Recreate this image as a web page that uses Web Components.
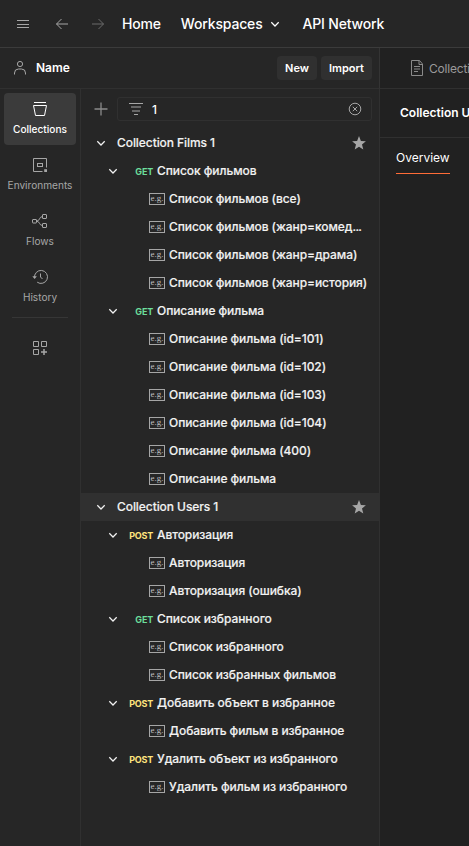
<!DOCTYPE html>
<html lang="ru">
<head>
<meta charset="utf-8">
<title>API workspace</title>
<style>
html,body{margin:0;height:100%;overflow:hidden;background:#262626}
body{font-family:Inter,"Noto Sans",sans-serif;font-size:12px;color:#fff}
.dots{letter-spacing:-.7px}
</style>
</head>
<body>
<app-shell>
  <top-bar slot="top"></top-bar>
  <workspace-bar slot="bar"></workspace-bar>
  <side-nav slot="nav">
    <nav-item icon="collections" active>Collections</nav-item>
    <nav-item icon="environments">Environments</nav-item>
    <nav-item icon="flows">Flows</nav-item>
    <nav-item icon="history">History</nav-item>
  </side-nav>
  <collection-panel slot="panel">
    <tree-row kind="collection">Collection Films 1</tree-row>
    <tree-row kind="request" method="GET">Список фильмов</tree-row>
    <tree-row kind="example">Список фильмов (все)</tree-row>
    <tree-row kind="example">Список фильмов (жанр=комед<span class="dots">...</span></tree-row>
    <tree-row kind="example">Список фильмов (жанр=драма)</tree-row>
    <tree-row kind="example">Список фильмов (жанр=история)</tree-row>
    <tree-row kind="request" method="GET">Описание фильма</tree-row>
    <tree-row kind="example">Описание фильма (id=101)</tree-row>
    <tree-row kind="example">Описание фильма (id=102)</tree-row>
    <tree-row kind="example">Описание фильма (id=103)</tree-row>
    <tree-row kind="example">Описание фильма (id=104)</tree-row>
    <tree-row kind="example">Описание фильма (400)</tree-row>
    <tree-row kind="example">Описание фильма</tree-row>
    <tree-row kind="collection" selected>Collection Users 1</tree-row>
    <tree-row kind="request" method="POST">Авторизация</tree-row>
    <tree-row kind="example">Авторизация</tree-row>
    <tree-row kind="example">Авторизация (ошибка)</tree-row>
    <tree-row kind="request" method="GET">Список избранного</tree-row>
    <tree-row kind="example">Список избранного</tree-row>
    <tree-row kind="example">Список избранных фильмов</tree-row>
    <tree-row kind="request" method="POST">Добавить объект в избранное</tree-row>
    <tree-row kind="example">Добавить фильм в избранное</tree-row>
    <tree-row kind="request" method="POST">Удалить объект из избранного</tree-row>
    <tree-row kind="example">Удалить фильм из избранного</tree-row>
  </collection-panel>
  <detail-pane slot="detail"></detail-pane>
</app-shell>
<script>
const ICONS = {
  menu: '<path d="M2 4.500h12M2 8.500h12M2 11.500h12"/>',
  back: '<path d="M14 8H2.500M7.500 3l-5 5 5 5"/>',
  forward: '<path d="M2 8h11.500M8.500 3l5 5-5 5"/>',
  down: '<path d="M4.300 6.300 8 10l3.700-3.700" stroke-width="1.250"/>',
  user: '<circle cx="8" cy="4" r="2.600"/><path d="M2.500 14.500v-1.500a4 4 0 0 1 4-4h3a4 4 0 0 1 4 4v1.500"/>',
  doc: '<path d="M3 .5h7.500L13.500 4v11.500h-11V.5zM10 .5v4h3.500M5 6.500h6M5 9h6M5 11.500h4"/>',
  collections: '<path d="M2 1.500h12M1.500 4.500h13l-2 10h-9z" stroke-linejoin="round"/>',
  environments: '<path d="M10.500 14.500h-9v-13h13v9"/><rect x="5.500" y="6.500" width="5" height="3"/><path d="M12.200 12.200h2.800v2.800h-2.800z" fill="currentColor" stroke="none"/>',
  flows: '<rect x=".5" y="6.500" width="4" height="3.500" rx=".5"/><rect x="10.500" y="1.500" width="4" height="4" rx=".5"/><rect x="10.500" y="10.500" width="4" height="4" rx=".5"/><path d="M4.500 8.200C8 8.200 7 3.500 10.500 3.500M4.500 8.200c3.500 0 2.500 4.300 6 4.300"/>',
  history: '<path d="M2.600 9A6.500 6.500 0 1 1 5.200 13.200M8.500 4.500V8l2 2"/><path d="M.3 7.300h4.600L2.600 10z" fill="currentColor" stroke="none"/>',
  apps: '<path d="M1.500 1.500h5v5h-5zM9.500 1.500h5v5h-5zM1.500 9.500h5v5h-5z"/><path d="M12 9v6M9 12h6" stroke-width="1.500"/>',
  plus: '<path d="M8 1.500v13M1.500 8h13" stroke-width="1.300"/>',
  filter: '<path d="M1 2.500h14M3 6h10M4 10h8M6 13.500h4" stroke-width="1.200"/>',
  clear: '<circle cx="8" cy="8" r="5.800"/><path d="m5.800 5.800 4.400 4.400M10.200 5.800l-4.400 4.400"/>',
  star: '<path d="m8 1 1.900 4.900 5 .3-3.900 3.200 1.300 5.200L8 11.700l-4.300 2.900 1.300-5.200L1.100 6.200l5-.3z" fill="currentColor" stroke="none"/>'
};
function define(name, css, html) {
  customElements.define(name, class extends HTMLElement {
    constructor() {
      super();
      const t = document.createElement('template');
      t.innerHTML = '<style>:host,*{box-sizing:border-box}' + css + '</style>' + (typeof html === 'function' ? html(this) : html);
      this.attachShadow({mode: 'open'}).append(t.content.cloneNode(true));
    }
  });
}
define('ui-icon', ':host{display:block;width:16px;height:16px;flex:none}svg{display:block;width:100%;height:100%}',
  el => `<svg viewBox="0 0 16 16" fill="none" stroke="currentColor" stroke-width="1">${ICONS[el.getAttribute('name')]}</svg>`);

define('app-shell', `:host{display:grid;height:100vh;grid-template:48px 41px 1fr / 81px 299px 1fr;background:#262626}
  .top{grid-column:1/4;border-bottom:1px solid #3b3b3b}
  .bar{grid-column:1/3;border-bottom:1px solid #303030;border-right:1px solid #343434}
  .nav{border-right:1px solid #303030}.panel{border-right:1px solid #303030;min-width:0}
  .detail{grid-column:3;grid-row:2/4;min-width:0;background:#212121}`,
  `<div class="top"><slot name="top"></slot></div><div class="bar"><slot name="bar"></slot></div>
   <div class="detail"><slot name="detail"></slot></div><div class="nav"><slot name="nav"></slot></div><div class="panel"><slot name="panel"></slot></div>`);

define('top-bar', `:host{display:flex;align-items:center;height:47px;padding-left:15px;font-size:14px;font-weight:500;letter-spacing:-.17px;color:#fff}
  ui-icon{color:#a6a6a6}.back{margin-left:23px}.fwd{margin-left:20px;color:#6b6b6b}.home{margin-left:16px}.ws{margin-left:20px}.chev{margin-left:4px;color:#fff}.api{margin-left:20px}`,
  `<ui-icon name="menu"></ui-icon><ui-icon class="back" name="back"></ui-icon><ui-icon class="fwd" name="forward"></ui-icon>
   <span class="home">Home</span><span class="ws">Workspaces</span><ui-icon class="chev" name="down"></ui-icon><span class="api">API Network</span>`);

define('workspace-bar', `:host{display:flex;align-items:center;height:40px;padding:0 7px 0 12px;font-weight:600}
  ui-icon{color:#a6a6a6;margin-right:8px}.name{flex:1;margin-top:-1px}
  button{all:unset;box-sizing:border-box;height:24px;line-height:24px;border-radius:4px;background:#303030;padding:0 8px;margin-left:4px;text-align:center;font-size:11px}
  .new{width:40px}.import{width:51px}`,
  `<ui-icon name="user"></ui-icon><span class="name">Name</span><button class="new">New</button><button class="import">Import</button>`);

define('side-nav', `:host{display:flex;flex-direction:column;align-items:center;padding:4px 4px 0;gap:4px}
  hr{width:56px;height:1px;border:0;background:#363636;margin:0}.apps{color:#a6a6a6;margin-top:18px}`,
  `<slot></slot><hr><ui-icon class="apps" name="apps"></ui-icon>`);

define('nav-item', `:host{display:flex;flex-direction:column;align-items:center;width:72px;height:52px;border-radius:4px;padding-top:8px;gap:4px;color:#a6a6a6;font-size:10.1px;line-height:16px}
  :host([active]){background:#3b3b3b;color:#fff;font-weight:500}span{white-space:nowrap}`,
  el => `<ui-icon name="${el.getAttribute('icon')}"></ui-icon><span><slot></slot></span>`);

define('collection-panel', `:host{display:block}
  .search{display:flex;align-items:center;height:40px;padding:8px 7px 8px 12px}
  .plus{color:#8a8a8a}.field{display:flex;align-items:center;flex:1;height:24px;margin-left:8px;border:1px solid #303030;border-radius:3px;padding:0 8px 0 10px}
  .filter{color:#a6a6a6}.q{flex:1;margin-left:8px;font-size:12px;font-weight:500}.clear{color:#a6a6a6}`,
  `<div class="search"><ui-icon class="plus" name="plus"></ui-icon><div class="field"><ui-icon class="filter" name="filter"></ui-icon><span class="q">1</span><ui-icon class="clear" name="clear"></ui-icon></div></div><slot></slot>`);

define('tree-row', `:host{display:flex;align-items:center;height:28px;padding-left:12px;font-weight:500;color:#f2f2f2;white-space:nowrap}
  :host([selected]){background:#303030}
  :host([kind=request]){padding-left:24px}:host([kind=example]){padding-left:68px}
  .text{margin-left:8px;padding-bottom:2px;letter-spacing:-.07px;-webkit-text-stroke:.15px}:host([kind=request]) .text{margin-left:4px}:host([kind=example]) .text{margin-left:4px}
  .method{width:32px;text-align:right;font-size:9px;font-weight:700;letter-spacing:-.2px;color:#6bdd9a}.post{color:#ffe47e}
  .eg{width:16px;height:12px;border:1px solid #a6a6a6;font:9px/8px "Liberation Serif",serif;text-align:center;color:#c0c0c0}
  .star{margin-left:auto;margin-right:12px;color:#a6a6a6}`,
  el => {
    const kind = el.getAttribute('kind'), m = el.getAttribute('method');
    const lead = kind === 'example' ? '<span class="eg">e.g.</span>' : '<ui-icon name="down"></ui-icon>' + (m ? `<span class="method ${m.toLowerCase()}">${m}</span>` : '');
    return lead + '<span class="text"><slot></slot></span>' + (kind === 'collection' ? '<ui-icon class="star" name="star"></ui-icon>' : '');
  });

define('detail-pane', `:host{display:block;overflow:hidden;white-space:nowrap}
  .tab{display:flex;align-items:center;height:41px;border-bottom:1px solid #303030;padding-left:29px;color:#9a9a9a;letter-spacing:-.2px}.tab ui-icon{margin-right:4px;color:#8a8a8a}
  .title{height:49px;line-height:48px;padding-left:20px;border-bottom:1px solid #303030;font-weight:600}
  .tabs{padding:8px 16px}.on{display:inline-block;height:28px;line-height:24px;border-bottom:1px solid #ff6c37}`,
  `<div class="tab"><ui-icon name="doc"></ui-icon><span>Collection Users 1</span></div><div class="title">Collection Users 1</div><div class="tabs"><span class="on">Overview</span></div>`);
</script>
</body>
</html>
